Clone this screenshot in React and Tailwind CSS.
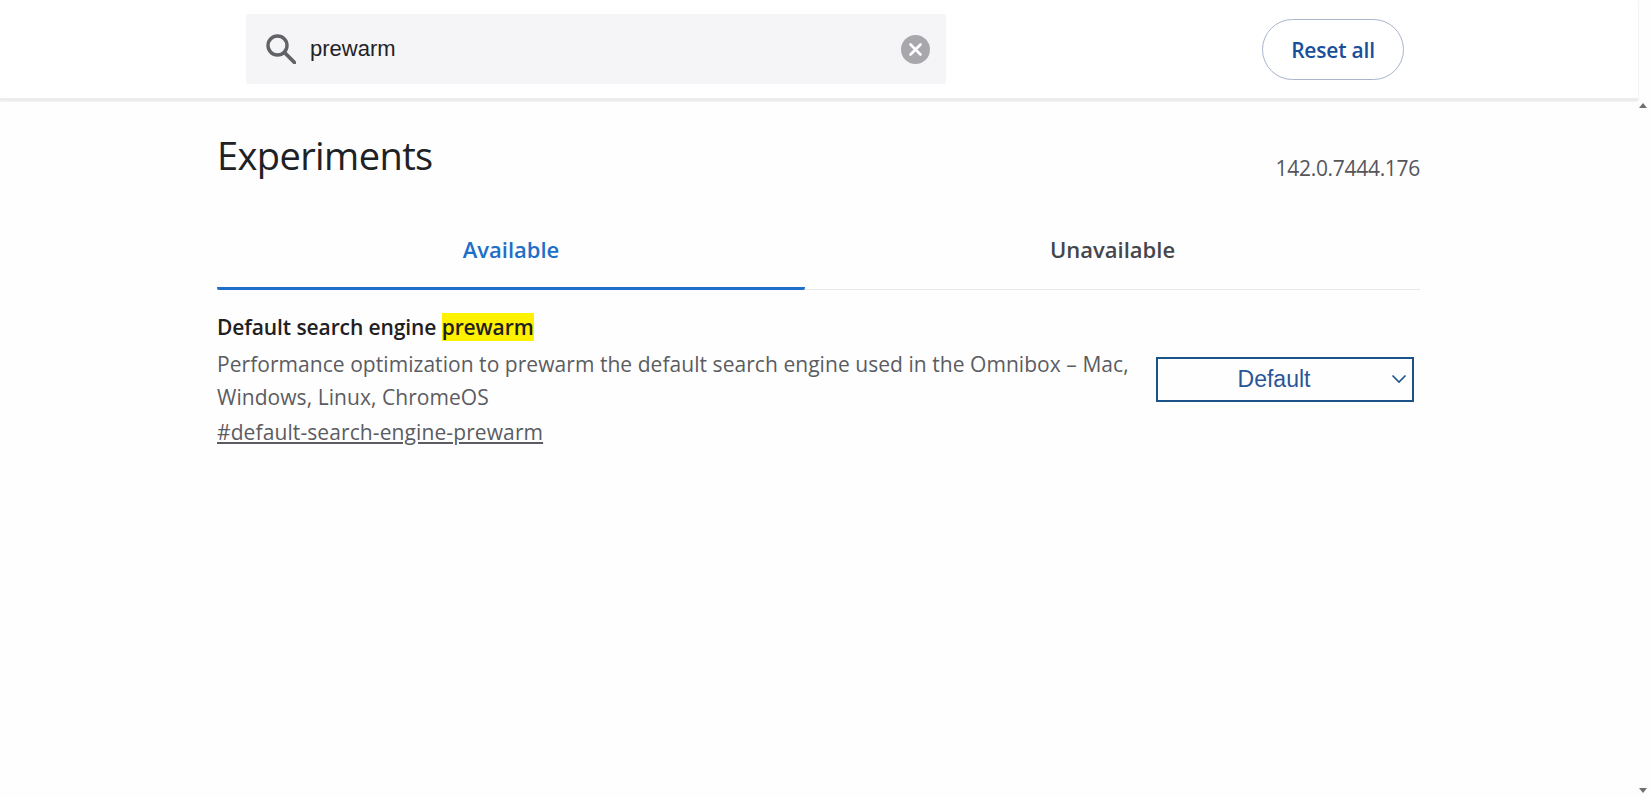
import React from 'react';

const uiFont = { fontFamily: '"Open Sans", sans-serif' };

function Header() {
  return (
    <header className="h-[100px] shrink-0 flex items-start bg-white shadow-[0_1px_2px_rgba(60,64,67,0.15)] border-b-2 border-[#ececed]">
      <div className="ml-[246px] mt-[14px] w-[700px] h-[70px] bg-[#f5f4f6] rounded-[2px] flex items-center pl-[20px] pr-[16px]">
        <svg className="w-[30px] h-[30px] shrink-0" viewBox="0 0 30 30" fill="none" stroke="#626366">
          <circle cx="11.5" cy="11.5" r="9.5" strokeWidth="3.4" />
          <path d="M18.5 18.5L28.5 28.5" strokeWidth="3.8" strokeLinecap="round" />
        </svg>
        <span className="ml-[14px] pb-[2px] text-[22px] text-[#222327] font-['Liberation_Sans',sans-serif]">prewarm</span>
        <svg className="ml-auto w-[29px] h-[29px] shrink-0" viewBox="0 0 29 29" fill="none">
          <circle cx="14.5" cy="14.5" r="14.5" fill="#a8a8ac" />
          <path d="M9.5 9.5L19.5 19.5M19.5 9.5L9.5 19.5" stroke="#ffffff" strokeWidth="2.6" strokeLinecap="round" />
        </svg>
      </div>
      <button className="ml-[316px] mt-[19px] w-[142px] h-[61px] pt-[2px] rounded-full border border-[#a9b5cc] bg-white text-[#1a4f9c] text-[21px] font-semibold tracking-[-0.2px]" style={uiFont}>
        Reset all
      </button>
    </header>
  );
}

function Tabs() {
  return (
    <div className="mt-[36px] flex border-b border-[#e7e7e9] h-[71px]">
      <div className="w-[588px] flex justify-center border-b-[3px] border-[#1f6fc9] rounded-b-[2px] -mb-px pt-[14px] text-[#1f6fc9] text-[22px] font-semibold">
        Available
      </div>
      <div className="flex-1 flex justify-center pt-[14px] text-[#45464b] text-[22px] font-semibold">
        Unavailable
      </div>
    </div>
  );
}

function Experiment() {
  return (
    <div className="mt-[22px] flex">
      <div className="w-[939px] shrink-0">
        <h2 className="text-[#1f2024] text-[21px] leading-[30px] font-semibold tracking-[-0.1px]">
          Default search engine <mark className="bg-[#fff200] text-[#1f2024]">prewarm</mark>
        </h2>
        <p className="mt-[6px] text-[#5b5c61] text-[21px] leading-[33px] tracking-[0.05px]">
          Performance optimization to prewarm the default search engine used in the Omnibox – Mac, Windows, Linux, ChromeOS
        </p>
        <a href="#default-search-engine-prewarm" className="block mt-[2px] text-[#5b5c61] text-[21px] leading-[33px] underline tracking-[0.1px]">
          #default-search-engine-prewarm
        </a>
      </div>
      <div className="mt-[45px] w-[258px] h-[45px] border-2 border-[#1b5288] flex items-center relative">
        <span className="flex-1 text-center pr-[22px] text-[#2a5598] text-[23px] font-['Liberation_Sans',sans-serif]">Default</span>
        <svg className="absolute right-[5px] top-[14px] w-[16px] h-[12px]" viewBox="0 0 16 12" fill="none" stroke="#1b5288" strokeWidth="1.6">
          <path d="M1.5 2.5L8 9L14.5 2.5" />
        </svg>
      </div>
    </div>
  );
}

export default function App() {
  return (
    <div className="h-screen overflow-hidden flex bg-[#fefefe]" style={uiFont}>
      <div className="flex-1 flex flex-col">
        <Header />
        <main className="pl-[217px] w-[1420px]">
          <div className="flex justify-between mt-[27px]">
            <h1 className="text-[38px] leading-[56px] text-[#202124] tracking-[-0.6px]">Experiments</h1>
            <span className="mt-[27px] text-[#55565b] text-[21px] leading-[28px] tracking-[-0.3px]">142.0.7444.176</span>
          </div>
          <Tabs />
          <Experiment />
        </main>
      </div>
      <div className="w-[12px] flex flex-col justify-between items-center pt-[103px] pb-[5px] pr-[2px]">
        <svg className="w-[8px] h-[5px]" viewBox="0 0 8 5"><path d="M4 0L8 5H0z" fill="#6f6f72" /></svg>
        <svg className="w-[8px] h-[5px]" viewBox="0 0 8 5"><path d="M0 0H8L4 5z" fill="#6f6f72" /></svg>
      </div>
    </div>
  );
}
